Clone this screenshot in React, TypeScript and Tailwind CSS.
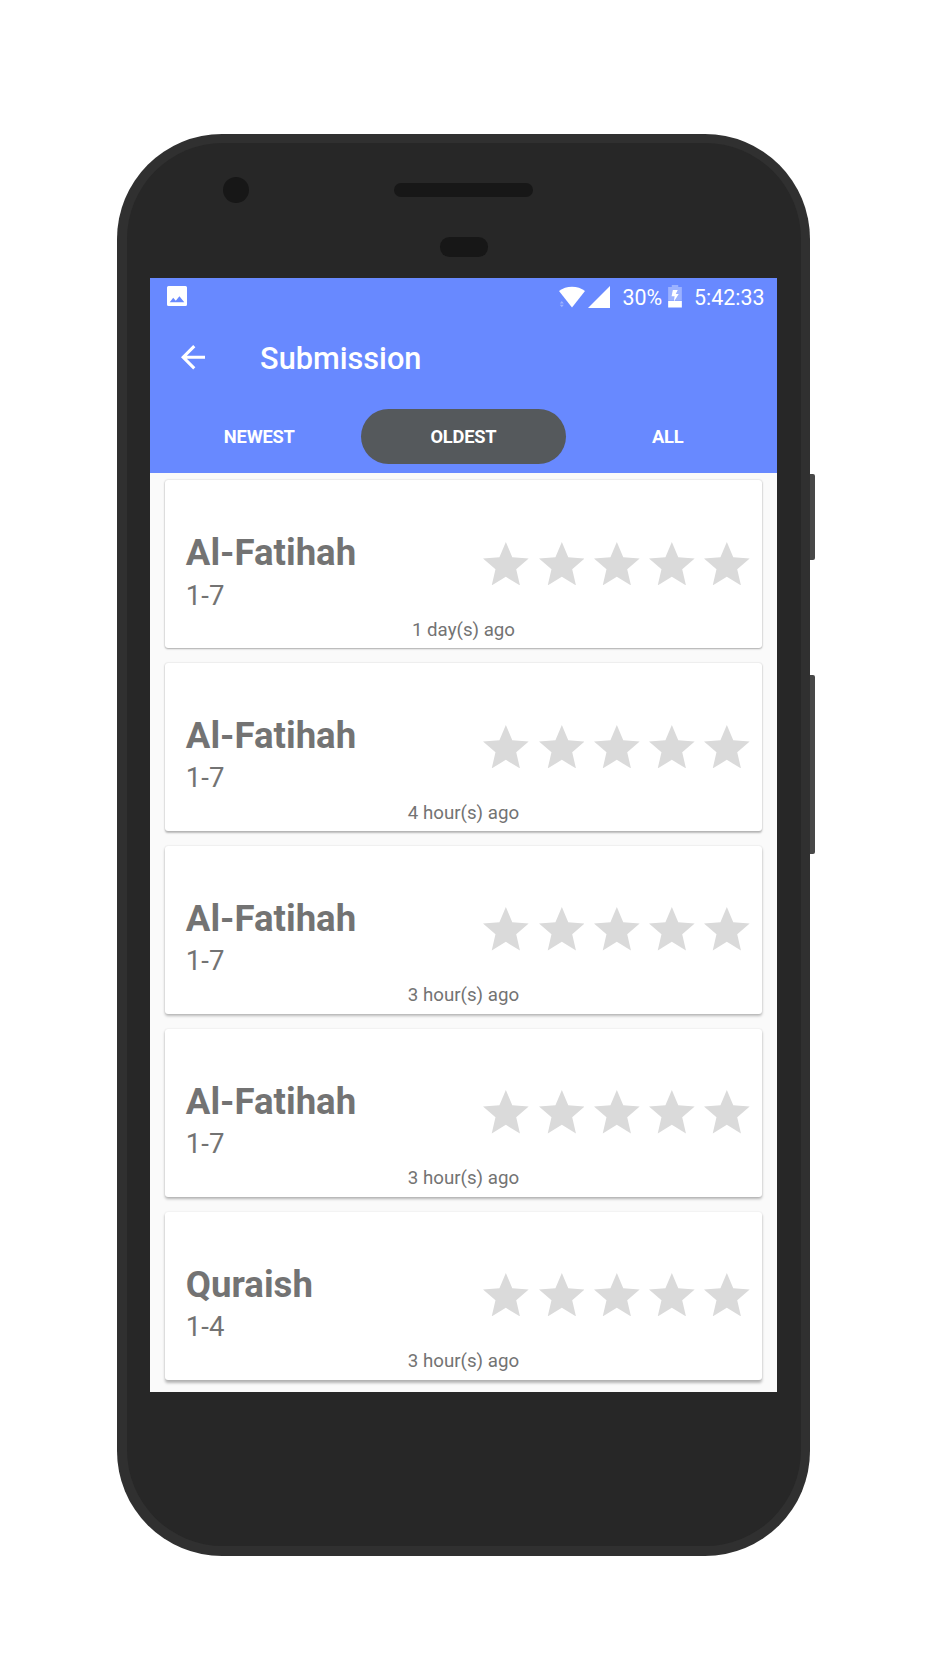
const submissions = [
  { surah: "Al-Fatihah", verses: "1-7", time: "1 day(s) ago", shadow: "shadow-[0_1px_2px_rgba(0,0,0,0.28),0_0_2px_rgba(0,0,0,0.18)]" },
  { surah: "Al-Fatihah", verses: "1-7", time: "4 hour(s) ago", shadow: "shadow-[0_1.5px_2px_rgba(0,0,0,0.26),0_0_2px_rgba(0,0,0,0.14)]" },
  { surah: "Al-Fatihah", verses: "1-7", time: "3 hour(s) ago", shadow: "shadow-[0_2px_3px_rgba(0,0,0,0.26),0_0_2px_rgba(0,0,0,0.12)]" },
  { surah: "Al-Fatihah", verses: "1-7", time: "3 hour(s) ago", shadow: "shadow-[0_2px_3px_rgba(0,0,0,0.28),0_0_2px_rgba(0,0,0,0.1)]" },
  { surah: "Quraish", verses: "1-4", time: "3 hour(s) ago", shadow: "shadow-[0_2.5px_3px_rgba(0,0,0,0.28),0_0_2px_rgba(0,0,0,0.08)]" },
];

function Star() {
  return (
    <svg viewBox="2 2 20 19" className="h-[43.4px] w-[45.7px] fill-[#dadada]">
      <path d="M12 17.27 18.18 21l-1.64-7.03L22 9.24l-7.19-.61L12 2 9.19 8.63 2 9.24l5.46 4.73L5.82 21z" />
    </svg>
  );
}

function StatusBar() {
  return (
    <div className="flex h-[36.6px] items-start pl-[17px] pr-[12.7px] text-white">
      <svg viewBox="0 0 20 20" className="mt-[8.3px] h-5 w-5">
        <path
          fill="currentColor"
          fillRule="evenodd"
          d="M1.5 0h17A1.5 1.5 0 0 1 20 1.5v17a1.5 1.5 0 0 1-1.5 1.5h-17A1.5 1.5 0 0 1 0 18.5v-17A1.5 1.5 0 0 1 1.5 0zM2.7 16.3h14.6l-4.9-6-3.6 4.4-2.6-3z"
        />
      </svg>
      <div className="ml-auto flex items-start">
        <svg viewBox="0 0 26 22" className="mt-[7.5px] h-[22px] w-[26px] fill-white">
          <path d="M0 5C7-.8 19-.8 26 5L13 21.5z" />
          <path opacity=".35" d="M.8 17.5 2.8 15l2 2.5zM.8 18.8h4l-2 2.5z" />
        </svg>
        <svg viewBox="0 0 22 22" className="ml-[3px] mt-[7.5px] h-[22px] w-[22px] fill-white">
          <path d="M0 22 22 0v22z" />
        </svg>
        <span className="ml-[12.5px] mt-[7px] text-[21.4px] leading-[26px]">30%</span>
        <svg viewBox="0 0 14 23" className="ml-[6px] mt-[7px] h-[22.5px] w-[14px] fill-white">
          <path opacity=".35" d="M0 16V2h3.7V0h6.600v2H14v14z" />
          <path d="M0 16.3h14V23H0zM4.8 5h5l-2 4.3h3L5.8 17l.8-5.5H3.5z" />
        </svg>
        <span className="ml-[12px] mt-[7px] text-[21.4px] leading-[26px]">5:42:33</span>
      </div>
    </div>
  );
}

function Tabs() {
  return (
    <div className="flex h-[73px] items-start px-[7.5px] pt-[9px] text-[18.3px] font-bold tracking-[-0.2px] text-white">
      <button className="h-[55px] flex-1 pt-[1px]">NEWEST</button>
      <button className="h-[55px] flex-1 rounded-full bg-[#55595c] pt-[1px]">OLDEST</button>
      <button className="h-[55px] flex-1 pt-[1px]">ALL</button>
    </div>
  );
}

export default function App() {
  return (
    <div className="flex h-[1670px] w-[928px] items-start bg-white pl-[117.4px] pt-[133.5px] font-['Roboto',sans-serif]">
      <div className="h-[1422.3px] w-[692.6px] shrink-0 rounded-[105px] bg-[#303030] p-[9.4px]">
        <div className="h-full w-full overflow-hidden rounded-[96px] bg-[#272727]">
          <div className="relative flex h-[135.2px] justify-center">
            <div className="absolute left-[96.2px] top-[34.2px] h-[26px] w-[26px] rounded-full bg-[#171717]" />
            <div className="flex flex-col items-center pt-[40.2px]">
              <div className="h-[14px] w-[138.6px] rounded-full bg-[#171717]" />
              <div className="mt-[40px] h-[20px] w-[48px] rounded-[9.5px] bg-[#171717]" />
            </div>
          </div>
          <div className="ml-[22.9px] h-[1114px] w-[627.6px] overflow-hidden bg-[#fafafa]">
            <header className="h-[195px] bg-[#6889ff]">
              <StatusBar />
              <div className="flex h-[85.4px] items-center pl-[31px] text-white">
                <svg viewBox="4 4 16 16" className="h-[24.4px] w-[24.4px] fill-white">
                  <path d="M20 11H7.83l5.59-5.59L12 4l-8 8 8 8 1.41-1.41L7.83 13H20v-2z" />
                </svg>
                <h1 className="ml-[55px] mt-[4px] text-[30.7px] font-medium">Submission</h1>
              </div>
              <Tabs />
            </header>
            <main className="flex flex-col gap-[14.8px] px-[15px] pt-[7.4px]">
              {submissions.map((s, i) => (
                <article key={i} className={`h-[168px] shrink-0 rounded-[3px] bg-white pt-[51px] text-[#737373] ${s.shadow}`}>
                  <div className="flex items-start justify-between pl-[21.2px] pr-[12.4px]">
                    <div>
                      <h2 className="text-[36.6px] font-bold leading-[44px]">{s.surah}</h2>
                      <p className="mt-[3.2px] text-[27.5px] leading-[34px]">{s.verses}</p>
                    </div>
                    <div className="mt-[10.4px] flex gap-[9.5px]">
                      {[0, 1, 2, 3, 4].map((n) => (
                        <Star key={n} />
                      ))}
                    </div>
                  </div>
                  <p className="mt-[6.2px] text-center text-[18.7px] leading-[22px]">{s.time}</p>
                </article>
              ))}
            </main>
          </div>
        </div>
      </div>
      <div className="flex flex-col gap-[115px] pt-[340.5px]">
        <div className="h-[86px] w-[5px] rounded-r-[2px] bg-[#484848]" />
        <div className="h-[179px] w-[5px] rounded-r-[2px] bg-[#484848]" />
      </div>
    </div>
  );
}
